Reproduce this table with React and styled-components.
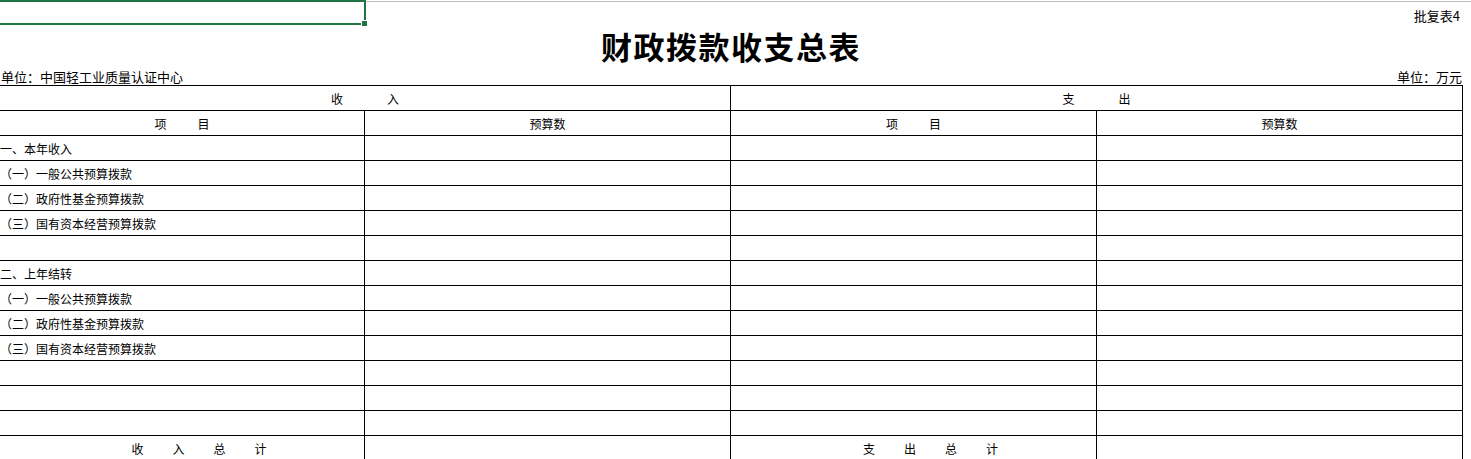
import styled, { createGlobalStyle } from "styled-components";

const GlobalStyle = createGlobalStyle`
  html, body {
    margin: 0;
    padding: 0;
    background: #ffffff;
  }
  body {
    font-family: "Noto Sans CJK SC", "Noto Sans", sans-serif;
    font-size: 12px;
    color: #000000;
  }
`;

const Sheet = styled.div`
  width: 1471px;
  height: 459px;
  overflow: hidden;
`;

const TopBar = styled.div`
  display: flex;
  height: 25px;
`;

const SelectedCell = styled.div`
  position: relative;
  box-sizing: border-box;
  width: 366px;
  height: 25px;
  border: 2px solid #217346;
  border-left: none;
`;

const Handle = styled.span`
  position: absolute;
  right: -4px;
  bottom: -4px;
  width: 5px;
  height: 5px;
  background: #217346;
  border: 1px solid #ffffff;
`;

const TopRest = styled.div`
  flex: 1;
  margin-top: 1px;
  border-top: 1px solid #bfbfbf;
  display: flex;
  justify-content: flex-end;
  align-items: center;
  padding-right: 11px;
  height: 23px;
`;

const Caption = styled.span`
  font-size: 13px;
  margin-top: 4px;
`;

const Title = styled.h1`
  margin: 0;
  width: 1462px;
  height: 42px;
  line-height: 42px;
  text-align: center;
  font-size: 31px;
  font-weight: 700;
  letter-spacing: 1.5px;
`;

const UnitRow = styled.div`
  width: 1462px;
  height: 18px;
  display: flex;
  justify-content: space-between;
  align-items: flex-end;
  font-size: 13px;
  line-height: 16px;
  padding-left: 1px;
  box-sizing: border-box;
`;

const Grid = styled.div`
  display: grid;
  grid-template-columns: 365px 366px 366px 366px;
  grid-auto-rows: 25px;
  width: 1463px;
  border-top: 1px solid #000;
`;

const Cell = styled.div`
  box-sizing: border-box;
  border-right: 1px solid #000;
  border-bottom: 1px solid #000;
  grid-column: span ${(p) => p.$span || 1};
  display: flex;
  align-items: center;
  justify-content: ${(p) => (p.$center ? "center" : "flex-start")};
  padding-left: ${(p) => p.$shift || 0}px;
  font-size: 12px;
  white-space: nowrap;
  overflow: hidden;
`;

const Spaced = styled.span`
  display: inline-flex;
  gap: ${(p) => p.$gap}px;
`;

const Word = ({ text, gap }) => (
  <Spaced $gap={gap}>
    {text.split(" ").map((w, i) => (
      <span key={i}>{w}</span>
    ))}
  </Spaced>
);

const rows = [
  "一、本年收入",
  "（一）一般公共预算拨款",
  "（二）政府性基金预算拨款",
  "（三）国有资本经营预算拨款",
  "",
  "二、上年结转",
  "（一）一般公共预算拨款",
  "（二）政府性基金预算拨款",
  "（三）国有资本经营预算拨款",
  "",
  "",
  "",
];

export default function App() {
  return (
    <Sheet>
      <GlobalStyle />
      <TopBar>
        <SelectedCell>
          <Handle />
        </SelectedCell>
        <TopRest>
          <Caption>批复表4</Caption>
        </TopRest>
      </TopBar>
      <Title>财政拨款收支总表</Title>
      <UnitRow>
        <span>单位：中国轻工业质量认证中心</span>
        <span>单位：万元</span>
      </UnitRow>
      <Grid>
        <Cell $span={2} $center>
          <Word text="收 入" gap={44} />
        </Cell>
        <Cell $span={2} $center>
          <Word text="支 出" gap={44} />
        </Cell>

        <Cell $center>
          <Word text="项 目" gap={31} />
        </Cell>
        <Cell $center>预算数</Cell>
        <Cell $center>
          <Word text="项 目" gap={31} />
        </Cell>
        <Cell $center>预算数</Cell>

        {rows.map((r, i) => [
          <Cell key={`a${i}`}>{r}</Cell>,
          <Cell key={`b${i}`} />,
          <Cell key={`c${i}`} />,
          <Cell key={`d${i}`} />,
        ])}

        <Cell $center $shift={34}>
          <Word text="收 入 总 计" gap={29} />
        </Cell>
        <Cell />
        <Cell $center $shift={34}>
          <Word text="支 出 总 计" gap={29} />
        </Cell>
        <Cell />
      </Grid>
    </Sheet>
  );
}
